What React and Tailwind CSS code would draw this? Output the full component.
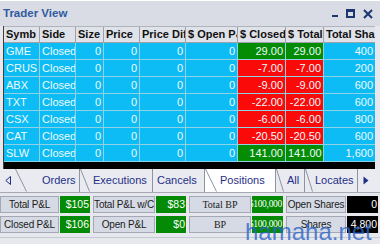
const cols = [
  { name: 'Symb', w: 36, align: 'left' },
  { name: 'Side', w: 36, align: 'left' },
  { name: 'Size', w: 28, align: 'right' },
  { name: 'Price', w: 36, align: 'right' },
  { name: 'Price Diff', w: 46, align: 'right' },
  { name: '$ Open P&L', w: 52, align: 'right' },
  { name: '$ Closed P&L', w: 48, align: 'right' },
  { name: '$ Total P&L', w: 38, align: 'right' },
  { name: 'Total Shares', w: 52, align: 'right' },
];

const rows = [
  ['GME', 29.0, '400'],
  ['CRUS', -7.0, '200'],
  ['ABX', -9.0, '600'],
  ['TXT', -22.0, '600'],
  ['CSX', -6.0, '800'],
  ['CAT', -20.5, '600'],
  ['SLW', 141.0, '1,600'],
];

// width of tab, slant width, gap before the label
const tabs = [
  { name: 'Orders', w: 'w-[65px]', slant: 12, ml: 'ml-[15px]' },
  { name: 'Executions', w: 'w-[73px]', slant: 10, ml: 'ml-[3px]' },
  { name: 'Cancels', w: 'w-[52px]', slant: 0, ml: 'ml-[4px]' },
  { name: 'Positions', w: 'w-[71px]', slant: 12, ml: 'ml-[3px]', active: true },
  { name: 'All', w: 'w-[29px]', slant: 8, ml: 'ml-[3px]' },
  { name: 'Locates', w: 'w-[53px]', slant: 8, ml: 'ml-[2px]' },
];

const stats = [
  [
    { label: 'Total P&L', lw: 'w-[59px]', value: '$105', vw: 'w-[30px]', tone: 'green' },
    { label: 'Total P&L w/C', lw: 'w-[62px]', value: '$83', vw: 'w-[30px]', tone: 'green' },
    { label: 'Total BP', lw: 'w-[62px]', value: '$100,000', vw: 'w-[31px]', tone: 'green', serif: true },
    { label: 'Open Shares', lw: 'w-[60px]', value: '0', vw: 'w-[31px]', tone: 'black' },
  ],
  [
    { label: 'Closed P&L', lw: 'w-[59px]', value: '$106', vw: 'w-[30px]', tone: 'green' },
    { label: 'Open P&L', lw: 'w-[62px]', value: '$0', vw: 'w-[30px]', tone: 'green' },
    { label: 'BP', lw: 'w-[62px]', value: '$100,000', vw: 'w-[31px]', tone: 'green', serif: true },
    { label: 'Shares', lw: 'w-[60px]', value: '4,800', vw: 'w-[31px]', tone: 'black' },
  ],
];

const Slant = ({ w }) =>
  w > 0 ? (
    <svg width={w} height="23" viewBox={`0 0 ${w} 23`} className="shrink-0">
      <path d={`M0.5 0 L${w - 0.5} 22.5`} stroke="#8c93a3" strokeWidth="1" fill="none" />
    </svg>
  ) : null;

export default function App() {
  const fmt = (n) => n.toFixed(2);

  return (
    <div className="relative w-[380px] h-[244px] overflow-hidden bg-[#e6e8ee] font-['Liberation_Sans',Arial,sans-serif] text-[11px]">
      {/* Title bar */}
      <div className="h-[26px] flex items-center justify-between px-[3px] bg-[#d9dce4] border-t border-white">
        <span className="font-bold text-[11.5px] text-[#2f5a9f]">Trader View</span>
        <div className="flex items-center gap-[8px] pr-[4px]">
          <span className="w-[6px] h-[2px] bg-[#1d3572] mt-[5px]" />
          <span className="w-[9px] h-[9px] border-2 border-t-[3px] border-[#1d3572]" />
          <svg width="10" height="10" viewBox="0 0 10 10">
            <path d="M1 1 L9 9 M9 1 L1 9" stroke="#1d3572" strokeWidth="2" />
          </svg>
        </div>
      </div>

      {/* Grid */}
      <div className="flex">
        <div className="ml-[3px] w-[372px] border-l border-[#404040]">
          <div className="flex h-[17px] bg-[#dfe2e9] border-t border-[#b0b4bd]">
            {cols.map((c) => (
              <div
                key={c.name}
                style={{ width: c.w }}
                className="shrink-0 overflow-hidden whitespace-nowrap font-bold text-[#111] px-[2px] leading-[15px] border-r border-b border-[#9ca1ac]"
              >
                {c.name}
              </div>
            ))}
          </div>
          {rows.map(([sym, pl, shares]) => {
            const tone = pl >= 0 ? 'bg-[#048c04]' : 'bg-[#fb0a0a]';
            const vals = [sym, 'Closed', '0', '0', '0', '0', fmt(pl), fmt(pl), shares];
            return (
              <div key={sym} className="flex h-[17px]">
                {cols.map((c, i) => (
                  <div
                    key={c.name}
                    style={{ width: c.w }}
                    className={`shrink-0 overflow-hidden whitespace-nowrap px-[2px] leading-[16px] text-[#eefaff] border-r border-b border-[#8fd2e6] ${
                      c.align === 'right' ? 'text-right' : 'text-left'
                    } ${i === 6 || i === 7 ? tone : 'bg-[#0dbcf4]'}`}
                  >
                    {vals[i]}
                  </div>
                ))}
              </div>
            );
          })}
          <div className="h-[7px] bg-black" />
        </div>
        <div className="flex-1 bg-[#e6e8ee]" />
      </div>

      {/* Tabs */}
      <div className="flex items-stretch h-[24px] bg-[#e9ebf1] border-b border-[#a4a9b5] text-[#1f2f86] text-[11px]">
        <div className="w-[15px] flex items-center justify-center">
          <svg width="6" height="9" viewBox="0 0 6 9">
            <path d="M5.5 0.5 L0.8 4.5 L5.5 8.5 Z" fill="none" stroke="#1f2f86" strokeWidth="1" />
          </svg>
        </div>
        {tabs.map((t) => (
          <div
            key={t.name}
            className={`${t.w} shrink-0 flex items-stretch border-r border-[#8c93a3] ${
              t.active ? 'bg-white' : 'bg-[#e9ebf1]'
            }`}
          >
            <Slant w={t.slant} />
            <span className={`${t.ml} flex items-center whitespace-nowrap`}>{t.name}</span>
          </div>
        ))}
        <div className="flex items-center pl-[5px]">
          <svg width="6" height="9" viewBox="0 0 6 9">
            <path d="M0.5 0.5 L5.5 4.5 L0.5 8.5 Z" fill="#1f2f86" />
          </svg>
        </div>
      </div>

      {/* Summary */}
      <div className="flex flex-col gap-[3px] pt-[3px]">
        {stats.map((row, ri) => (
          <div key={ri} className="flex gap-[3px] h-[17px]">
            {row.map((s) => (
              <div key={s.label} className="flex gap-[1px]">
                <div
                  className={`${s.lw} flex items-center justify-center whitespace-nowrap overflow-hidden bg-[#d6dae5] border border-[#a3a8b4] text-[#1a1a1a] ${
                    s.serif ? "font-['Liberation_Serif',serif] text-[10px]" : 'text-[10px] tracking-[-0.2px]'
                  }`}
                >
                  {s.label}
                </div>
                <div
                  className={`${s.vw} flex items-center justify-end pr-[1px] whitespace-nowrap overflow-hidden text-white ${
                    s.tone === 'green' ? 'bg-[#048a04]' : 'bg-black'
                  } ${s.serif ? "font-['Liberation_Serif',serif] text-[9.5px] tracking-[-0.3px]" : 'text-[10.5px]'}`}
                >
                  {s.value}
                </div>
              </div>
            ))}
          </div>
        ))}
        <div className="h-[2px] mt-[1px] border-t border-[#c4c8d0]" />
      </div>

      {/* Watermark */}
      <span className="absolute left-[245px] top-[220px] text-[24px] leading-none text-[#2d63c7]/80">
        hamaha.net
      </span>
    </div>
  );
}
